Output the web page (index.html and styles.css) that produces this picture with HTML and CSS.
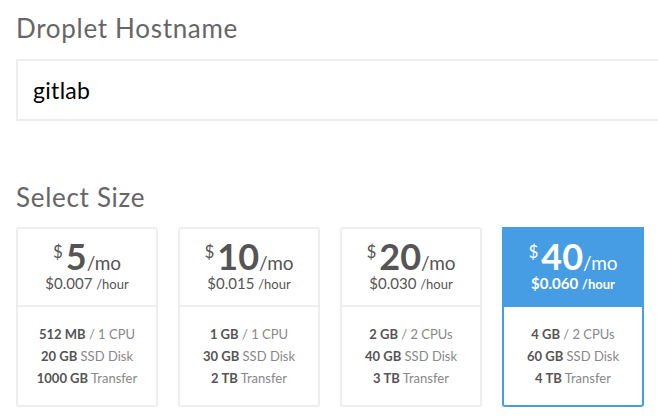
FILE: index.html
```html
<!DOCTYPE html>
<html>
<head>
<meta charset="utf-8">
<link rel="stylesheet" href="styles.css">
</head>
<body>
<div class="page">
  <h2 class="label">Droplet Hostname</h2>
  <div class="input">gitlab</div>
  <h2 class="label size-label">Select Size</h2>
  <div class="sizes">
    <div class="card">
      <div class="card-head">
        <div class="price"><span class="cur">$</span><span class="amt">5</span><span class="per">/mo</span></div>
        <div class="hour">$0.007 <span class="hr">/hour</span></div>
      </div>
      <div class="specs">
        <div><b>512 MB</b> / 1 CPU</div>
        <div><b>20 GB</b> SSD Disk</div>
        <div><b>1000 GB</b> Transfer</div>
      </div>
    </div>
    <div class="card">
      <div class="card-head">
        <div class="price"><span class="cur">$</span><span class="amt">10</span><span class="per">/mo</span></div>
        <div class="hour">$0.015 <span class="hr">/hour</span></div>
      </div>
      <div class="specs">
        <div><b>1 GB</b> / 1 CPU</div>
        <div><b>30 GB</b> SSD Disk</div>
        <div><b>2 TB</b> Transfer</div>
      </div>
    </div>
    <div class="card">
      <div class="card-head">
        <div class="price"><span class="cur">$</span><span class="amt">20</span><span class="per">/mo</span></div>
        <div class="hour">$0.030 <span class="hr">/hour</span></div>
      </div>
      <div class="specs">
        <div><b>2 GB</b> / 2 CPUs</div>
        <div><b>40 GB</b> SSD Disk</div>
        <div><b>3 TB</b> Transfer</div>
      </div>
    </div>
    <div class="card selected">
      <div class="card-head">
        <div class="price"><span class="cur">$</span><span class="amt">40</span><span class="per">/mo</span></div>
        <div class="hour">$0.060 <span class="hr">/hour</span></div>
      </div>
      <div class="specs">
        <div><b>4 GB</b> / 2 CPUs</div>
        <div><b>60 GB</b> SSD Disk</div>
        <div><b>4 TB</b> Transfer</div>
      </div>
    </div>
  </div>
</div>
</body>
</html>
```
FILE: styles.css
```css
html, body {
  margin: 0;
  padding: 0;
  background: #fff;
  overflow: hidden;
}
.page {
  padding: 0 0 0 16px;
  font-family: Lato, "Open Sans", sans-serif;
  color: #5a5a5a;
}
.label {
  margin: 0;
  padding-top: 12px;
  font-size: 26px;
  line-height: 32px;
  font-weight: 400;
  letter-spacing: 0.7px;
  color: #666;
}
.size-label {
  padding-top: 0;
  margin-top: 60px;
}
.input {
  margin-top: 15px;
  width: 700px;
  height: 62px;
  box-sizing: border-box;
  border: 2px solid #eee;
  padding-left: 15px;
  font-size: 23px;
  letter-spacing: 0.3px;
  line-height: 58px;
  color: #000;
}
.sizes {
  display: flex;
  gap: 20px;
  margin-top: 14px;
}
.card {
  width: 142px;
  height: 180px;
  box-sizing: border-box;
  border: 2px solid #eee;
  border-radius: 3px;
  text-align: center;
  display: flex;
  flex-direction: column;
}
.card-head {
  height: 76px;
  border-bottom: 2px solid #eee;
}
.price {
  display: flex;
  justify-content: center;
  align-items: baseline;
  padding-top: 9px;
  height: 36px;
  line-height: 36px;
  color: #555;
}
.cur {
  align-self: flex-start;
  font-size: 17px;
  line-height: 17px;
  margin-top: 5px;
  margin-right: 3px;
}
.amt {
  font-size: 36px;
  font-weight: 700;
}
.per {
  font-size: 19px;
  line-height: 16px;
}
.hour {
  font-size: 15px;
  line-height: 18px;
  margin-top: 0;
  color: #555;
}
.hr {
  font-size: 13px;
}
.specs {
  padding-top: 16px;
  font-size: 13px;
  line-height: 22px;
  color: #888;
}
.specs b {
  color: #555;
  font-weight: 700;
}
.selected {
  border-color: #479de3;
}
.selected .card-head {
  background: #479de3;
  border-bottom-color: #479de3;
  margin: -2px -2px 0;
  padding: 2px 2px 0;
}
.selected .price, .selected .hour {
  color: #fff;
}
.selected .hour {
  font-weight: 700;
}
```
